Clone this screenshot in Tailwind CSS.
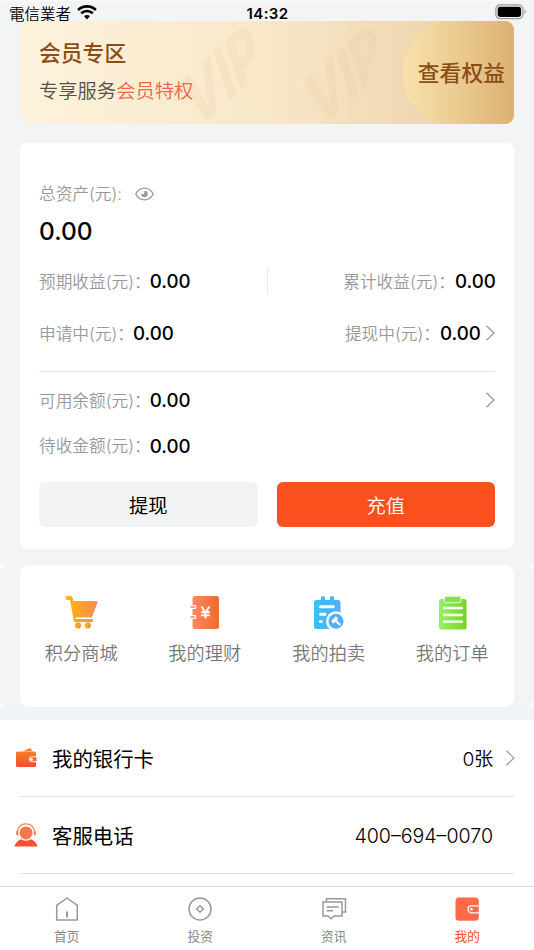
<!DOCTYPE html>
<html lang="zh">
<head>
<meta charset="utf-8">
<title>我的</title>
<script src="https://cdn.jsdelivr.net/npm/@tailwindcss/browser@4"></script>
</head>
<body class="w-[534px] h-[950px] overflow-hidden bg-white text-black font-['Inter','Noto_Sans_CJK_SC',sans-serif]">
<div class="w-[534px] h-[950px] flex flex-col overflow-hidden">
  <div class="h-[565px] shrink-0 bg-[#f2f4f6] border-t border-[#fafafa] flex flex-col px-5">
    <!-- Status bar -->
    <header class="h-5 shrink-0 -mx-5 pl-[9px] pr-[7px] grid grid-cols-3 items-center pt-[2px]">
      <div class="flex items-center gap-[6px] text-[15.5px] leading-5 font-[350] font-['Noto_Sans_CJK_TC','Noto_Sans_CJK_SC',sans-serif]">電信業者
        <svg class="w-5 h-[15px] -mt-[1px]" viewBox="0 0 20 15"><path d="M10 10.1a4.200 4.200 0 0 1 2.900 1.200L10 14.400l-2.900-3.100A4.200 4.200 0 0 1 10 10.100z"/><path d="M4.200 8.300a8.300 8.300 0 0 1 11.600 0M1.100 5a12.800 12.800 0 0 1 17.800 0" fill="none" stroke="#000" stroke-width="2.600"/></svg>
      </div>
      <div class="h-5 text-center text-[15px] leading-[22px] font-semibold tracking-[0.35px] -ml-px">14:32</div>
      <svg class="w-8 h-4 justify-self-end -mt-[2px]" viewBox="0 0 32 16"><rect x=".9" y=".9" width="27" height="13.8" rx="4.2" fill="none" stroke="#9a9b9d" stroke-width="1.3"/><rect x="2.7" y="2.7" width="23.4" height="10.2" rx="2.4"/><path d="M29.6 5.3q2.6 2.5 0 5z" fill="#9a9b9d"/></svg>
    </header>
    <!-- Membership banner -->
    <section class="relative h-[103px] shrink-0 rounded-[9px] overflow-hidden bg-linear-to-r from-[#fdf2dc] via-[#f8e8c9] to-[#ebcca5] flex justify-between">
      <svg class="absolute inset-0 w-[494px] h-[103px]" viewBox="0 0 494 103" font-family="Inter" font-weight="800" font-size="52" fill="#eab887">
        <text transform="matrix(.78 -.7 .42 1.3 176 110)" fill-opacity=".12">VIP</text>
        <text transform="matrix(.78 -.7 .42 1.3 298 110)" fill-opacity=".12">VIP</text>
      </svg>
      <div class="relative pl-[19px] pt-[16px]">
        <h1 class="text-[21.8px] leading-[32px] font-medium text-[#8b4d17]">会员专区</h1>
        <p class="mt-[8px] text-[19.3px] leading-[28px] font-[350] text-[#555048]">专享服务<span class="text-[#f0654b]">会员特权</span></p>
      </div>
      <div class="relative w-[111px] overflow-hidden flex items-center justify-end pr-[9px]">
        <svg class="absolute inset-0 w-[111px] h-[103px]" viewBox="0 0 111 103"><defs><linearGradient id="gold"><stop stop-color="#f9e2ac"/><stop offset=".55" stop-color="#e9c88d"/><stop offset="1" stop-color="#dcb172"/></linearGradient></defs><path d="M111 0H38C15 8 0 28 0 51.500S15 95 38 103H111z" fill="url(#gold)"/></svg>
        <span class="relative text-[21.8px] leading-8 font-medium text-[#8b4d17]">查看权益</span>
      </div>
    </section>
    <!-- Assets -->
    <section class="mt-[19px] h-[406px] shrink-0 rounded-[7px] bg-white px-[19px] text-[#999] text-[16.700px] font-[350] flex flex-col">
      <div class="mt-[40px] h-6 flex items-center">总资产(元):
        <svg class="ml-[13px] -mt-[2px] w-[19px] h-[14px]" viewBox="0 0 19 14" fill="none" stroke="#999" stroke-width="1.4"><path d="M.8 7C4.800-.8 14.200-.8 18.200 7 14.200 14.800 4.800 14.800.8 7z"/><path d="M9.500 3.800A3.200 3.200 0 1 1 6.400 6.300L9 7.600z" fill="#999" stroke="none"/></svg>
      </div>
      <div class="h-[49px] flex items-center pb-px text-[24.5px] font-medium text-black">0.00</div>
      <div class="h-[53px] grid grid-cols-[1fr_1px_1fr] items-center">
        <div class="flex items-center">预期收益(元)：<b class="w-[40px] -ml-px text-[18.7px] font-medium text-black">0.00</b></div>
        <i class="h-[26px] -mt-[3px] bg-[#e8e8e8]"></i>
        <div class="flex items-center justify-end">累计收益(元)：<b class="w-[40px] text-[18.7px] font-medium text-black">0.00</b></div>
      </div>
      <div class="h-[51px] flex items-center justify-between">
        <div class="flex items-center">申请中(元)：<b class="w-[40px] -ml-px text-[18.7px] font-medium text-black">0.00</b></div>
        <div class="flex items-center">提现中(元)：<b class="w-[40px] text-[18.7px] font-medium text-black">0.00</b>
          <svg class="ml-[5px] -mt-[3px] w-[10px] h-4" viewBox="0 0 10 16" fill="none" stroke="#999" stroke-width="1.3"><path d="M1.500.8 9 8l-7.500 7.200"/></svg></div>
      </div>
      <div class="mt-[11px] h-px shrink-0 bg-[#e3e3e3]"></div>
      <div class="mt-[3px] h-[52px] flex items-center justify-between">
        <div class="flex items-center pt-px">可用余额(元)：<b class="w-[40px] -ml-px -mt-px text-[18.7px] font-medium text-black">0.00</b></div>
        <svg class="-mt-[2px] w-[10px] h-4" viewBox="0 0 10 16" fill="none" stroke="#999" stroke-width="1.3"><path d="M1.500.8 9 8l-7.500 7.200"/></svg>
      </div>
      <div class="h-10 flex items-center">待收金额(元)：<b class="w-[40px] -ml-px text-[18.7px] font-medium text-black">0.00</b></div>
      <div class="mt-[15px] h-[45px] grid grid-cols-2 gap-[19px] text-[19.3px] font-normal">
        <button class="rounded-[6px] bg-[#f2f3f5] text-black pt-[3px]">提现</button>
        <button class="rounded-[6px] bg-[#fa501e] text-white pt-[3px] font-[350]">充值</button>
      </div>
    </section>
  </div>
  <!-- Shortcuts -->
  <section class="h-[142px] shrink-0 rounded-[8px] bg-[#f4f4f4] px-5">
    <div class="h-full rounded-[9px] bg-white grid grid-cols-4 pt-[29px] text-[18.200px] leading-[26px] font-[350] text-[#777]">
      <div class="flex flex-col items-center gap-[8px] -ml-px">
        <svg class="w-[38px] h-[38px]" viewBox="0 0 38 38"><defs><linearGradient id="cart"><stop stop-color="#ffb900"/><stop offset="1" stop-color="#f68a5c"/></linearGradient></defs><g fill="url(#cart)"><path d="M4.500 2h4q1.500 0 2 1.500L11.500 7h23q1.500 0 1 1.500L30.500 22q-.7 1.800-2.500 1.800H15l-.3 1.200h15q1.500 0 1.500 1.500T29.700 28H13.200q-1.200 0-1.500-1.200L8.100 6H5.500Q4 6 3.500 4.500T4.500 2z"/><circle cx="16" cy="31.400" r="3.100"/><circle cx="25.800" cy="31.400" r="3.100"/></g><path d="M13.500 24.200H28" stroke="#fff" stroke-width="1.300"/></svg>
        <span>积分商城</span>
      </div>
      <div class="flex flex-col items-center gap-[8px] -ml-px">
        <svg class="w-[38px] h-[38px]" viewBox="0 0 38 38"><defs><linearGradient id="book"><stop stop-color="#ff8661"/><stop offset="1" stop-color="#ee6b30"/></linearGradient></defs><rect x="6.500" y="2" width="26.500" height="33" rx="2.500" fill="url(#book)"/><g fill="none" stroke-width="1.200"><rect x="4" y="11" width="6.200" height="4" rx="1" fill="#fff"/><rect x="4" y="21" width="6.200" height="4" rx="1" fill="#fff"/><path d="M4.500 13h4.700M4.500 23h4.700" stroke="#ff8661" stroke-width="1.700"/><path d="m15.500 12.500 4 6 4-6M19.500 18v6.500M15 18.300h9M15 21.400h9" stroke="#fff" stroke-width="1.900"/></g></svg>
        <span>我的理财</span>
      </div>
      <div class="flex flex-col items-center gap-[8px]">
        <svg class="-ml-px w-[38px] h-[38px]" viewBox="0 0 38 38"><defs><linearGradient id="blue"><stop stop-color="#37c1f4"/><stop offset="1" stop-color="#56acff"/></linearGradient></defs><rect x="5" y="6" width="26.500" height="29" rx="2.500" fill="url(#blue)"/><path d="M14 4v5M23 4v5" stroke="#45b8fa" stroke-width="4.200" stroke-linecap="round"/><path d="M11.500 12.800h12.800M11.500 20.200h4.500M11.500 27.400h.8" stroke="#fff" stroke-width="3" stroke-linecap="round"/><circle cx="27" cy="27.200" r="10" fill="#fff"/><circle cx="27" cy="27.200" r="7.500" fill="#52afff"/><path d="m23.300 28.500 4.800-5" stroke="#fff" stroke-width="3.400"/><path d="m26 26 5.200 5" stroke="#fff" stroke-width="2.200"/></svg>
        <span>我的拍卖</span>
      </div>
      <div class="flex flex-col items-center gap-[8px]">
        <svg class="w-[38px] h-[38px]" viewBox="0 0 38 38"><defs><linearGradient id="green"><stop stop-color="#98f066"/><stop offset="1" stop-color="#75d421"/></linearGradient></defs><rect x="6" y="5" width="27.500" height="30.500" rx="2.500" fill="url(#green)"/><rect x="11.500" y="2.200" width="16.500" height="6.500" rx="1.500" fill="#85e343" stroke="#e9fbdc" stroke-width="1"/><path d="M11 14h18M11 21h18M11 27.700h18" stroke="#fff" stroke-width="2.300" stroke-linecap="round"/></svg>
        <span>我的订单</span>
      </div>
    </div>
  </section>
  <div class="h-[13px] shrink-0 bg-[#f0f4f7]"></div>
  <!-- Account rows -->
  <section class="h-[166px] shrink-0 px-5 text-[20.4px]">
    <div class="h-[77px] border-b border-[#e3e3e3] flex items-center">
      <svg class="-ml-[6px] w-6 h-6" viewBox="0 0 24 24"><defs><linearGradient id="wallet" x2="0" y2="1"><stop stop-color="#f97d25"/><stop offset="1" stop-color="#f14e30"/></linearGradient></defs><path d="m9 5.300 6.600-3q1-.4 1.500.6l1 2.400z" fill="#f97d25"/><rect x="2" y="5.600" width="20" height="15.400" rx="1.600" fill="url(#wallet)"/><path d="M22.500 10.800H17.600a2.400 2.400 0 0 0 0 4.800h4.900" fill="#f36530" stroke="#fff" stroke-width=".9"/><circle cx="17.400" cy="13.200" r="1.500" fill="#fff"/></svg>
      <span class="ml-[14px] pt-[5px]">我的银行卡</span>
      <span class="ml-auto pt-[2px] text-[19.300px] font-[350] tracking-[-0.3px]">0张</span>
      <svg class="ml-[12px] mr-[-1px] w-[10px] h-4" viewBox="0 0 10 16" fill="none" stroke="#999" stroke-width="1.200"><path d="M1.500.8 9 8l-7.500 7.200"/></svg>
    </div>
    <div class="h-[77px] border-b border-[#e3e3e3] flex items-center">
      <svg class="-ml-[6px] w-6 h-6" viewBox="0 0 24 24"><defs><linearGradient id="agent" x2="0" y2="1"><stop stop-color="#f08c4d"/><stop offset="1" stop-color="#f34b30"/></linearGradient></defs><path d="M3.200 9.500C4 3.500 7.600.9 12 .9s8 2.600 8.800 8.600" fill="none" stroke="#ef8960" stroke-width="1.300"/><circle cx="12" cy="9.900" r="6.500" fill="#f07a4b"/><path d="M4.200 7.300v5.500Q2 12.500 2 10t2.200-2.700zM19.800 7.300v5.500Q22 12.500 22 10t-2.200-2.700z" fill="#ef7d50"/><path d="M.3 23.500Q2.500 17.500 7.300 16.200q4.700 3.200 9.400 0 4.800 1.300 7 7.300z" fill="#f5502f"/></svg>
      <span class="ml-[14px] pt-[5px]">客服电话</span>
      <span class="ml-auto mr-[21px] pt-[3px] text-[19.600px] font-[350]">400–694–0070</span>
    </div>
  </section>
  <!-- Tab bar -->
  <nav class="h-[64px] shrink-0 border-t border-[#d9d9d9] bg-white grid grid-cols-4 pt-[9px] text-[12.700px] leading-[18px] text-[#888]">
    <div class="flex flex-col items-center gap-[6px]">
      <svg class="w-[26px] h-[26px]" viewBox="0 0 26 26" fill="none" stroke="#999" stroke-width="1.500"><path d="M2.700 9.400 13 2l10.300 7.400V24H2.700z" stroke-linejoin="round"/><path d="M13 15.500v6" stroke-width="2"/></svg>首页
    </div>
    <div class="flex flex-col items-center gap-[6px]">
      <svg class="w-[26px] h-[26px]" viewBox="0 0 26 26" fill="none" stroke="#999" stroke-width="1.500"><circle cx="13" cy="13" r="11"/><path d="m13 9.700 3.300 3.300-3.300 3.300L9.700 13z"/></svg>投资
    </div>
    <div class="flex flex-col items-center gap-[6px]">
      <svg class="w-[26px] h-[26px]" viewBox="0 0 26 26" fill="none" stroke="#999" stroke-width="1.500"><path d="M5.500 5.500V2.800h19V16H21"/><path d="M2 6h19v14h-8l-3 2.800L7 20H2zM5.500 11h12.300M5.500 14.800H12"/></svg>资讯
    </div>
    <div class="flex flex-col items-center gap-[6px] text-[#fb4e1c]">
      <svg class="w-[26px] h-[26px]" viewBox="0 0 26 26"><rect x="1.500" y="1.500" width="23.300" height="23.300" rx="3.500" fill="#ff6b49"/><path d="M25 9.800h-7.500a3.500 3.500 0 0 0 0 7H25" fill="none" stroke="#fff" stroke-width="1.200"/><circle cx="17.400" cy="13.300" r="1.200" fill="#fff"/></svg>我的
    </div>
  </nav>
</div>
</body>
</html>
